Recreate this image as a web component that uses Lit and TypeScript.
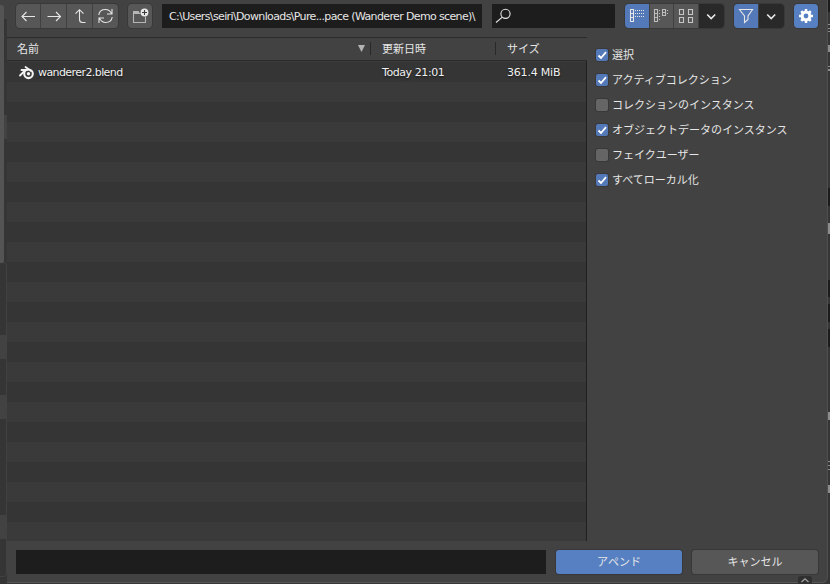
import { LitElement, html, css, svg } from "lit";
import { customElement, property } from "lit/decorators.js";
import { classMap } from "lit/directives/class-map.js";

const icons: Record<string, unknown> = {
  back: svg`<path d="M19 12.500H6.500M10.500 8L6 12.500L10.500 17"/>`,
  forward: svg`<path d="M5.500 12.500H18M14 8L18.500 12.500L14 17"/>`,
  up: svg`<path d="M11.500 6V15.500Q11.500 18.500 14.500 18.500H17.500M7.500 9.700L11.500 5.700L15.500 9.700"/>`,
  refresh: svg`<path d="M4.800 11Q5.500 5.500 11.500 5.500Q15.500 5.500 17.500 9.500M18 5V10H13M18.200 13Q17.500 18.500 11.500 18.500Q8 18.500 5.500 14.500M5 19V14H10"/>`,
  folder: svg`<path d="M12.500 9.500H5.500V18.500H17.500V12.500" stroke="#b5b5b5"/><path d="M5 10V7H10.500L12 9.500V10Z" fill="#b5b5b5" stroke="none"/><circle cx="16.500" cy="8.500" r="3.900" fill="#e8e8e8" stroke="none"/><path d="M14 8.500H19M16.500 6V11" stroke="#3c3c3c"/>`,
  list: svg`<path d="M5.500 5.500H8.500V17.500H5.500ZM5.500 9.500H8.500M5.500 13.500H8.500"/><path d="M10 6.500H20M10 9.500H20M10 12.500H20" stroke-dasharray="1 1"/>`,
  columns: svg`<path d="M4.500 5.500H7.500V17.500H4.500ZM4.500 9.500H7.500M4.500 13.500H7.500M12.500 5.500H15.500V11.500H12.500ZM12.500 8.500H15.500" stroke="#bdbdbd"/><path d="M9.500 6V16M17.500 6V12" stroke="#bdbdbd" stroke-dasharray="1 2"/>`,
  grid: svg`<path d="M5.500 5.500H9.500V10.500H5.500ZM14.500 5.500H18.500V10.500H14.500ZM5.500 13.500H9.500V18.500H5.500ZM14.500 13.500H18.500V18.500H14.500Z" stroke="#c6c6c6"/>`,
  down: svg`<path d="M7.200 10.500L11.200 14.500L15.200 10.500" stroke-width="1.700"/>`,
  filter: svg`<path d="M5.500 5.500H18.500L14 12V15.500L10.500 18.500V12Z"/>`,
  gear: svg`<circle cx="12" cy="12" r="3.900" stroke="#fff" stroke-width="3"/><path d="M12 5V8M12 16V19M5 12H8M16 12H19M7.200 7.200L9 9M15 15L16.800 16.800M7.200 16.800L9 15M15 9L16.800 7.200" stroke="#fff" stroke-width="2.500"/>`,
  search: svg`<circle cx="13.500" cy="9.800" r="4.600"/><path d="M10.300 13.100L4 18.500"/>`,
};

@customElement("ui-icon")
class UiIcon extends LitElement {
  @property() name = "";
  static styles = css`
    :host { display: block; width: 24px; height: 24px; flex: none; }
    svg { display: block; fill: none; stroke: #e6e6e6; stroke-width: 1.1; }
  `;
  render() {
    return html`<svg width="24" height="24" viewBox="0 0 24 24">${icons[this.name]}</svg>`;
  }
}

interface Tool { icon: string; w: number; kind?: "on" | "dark"; }

const navigation: Tool[] = [
  { icon: "back", w: 24 }, { icon: "forward", w: 25 }, { icon: "up", w: 25 }, { icon: "refresh", w: 25 },
];
const display: Tool[] = [
  { icon: "list", w: 24, kind: "on" }, { icon: "columns", w: 23 }, { icon: "grid", w: 24 }, { icon: "down", w: 25, kind: "dark" },
];
const filters: Tool[] = [
  { icon: "filter", w: 24, kind: "on" }, { icon: "down", w: 25, kind: "dark" },
];

const options: [string, boolean][] = [
  ["選択", true],
  ["アクティブコレクション", true],
  ["コレクションのインスタンス", false],
  ["オブジェクトデータのインスタンス", true],
  ["フェイクユーザー", false],
  ["すべてローカル化", true],
];

@customElement("app-root")
class AppRoot extends LitElement {
  static styles = css`
    * { box-sizing: border-box; }
    :host {
      display: grid; grid-template-columns: 7px 821px 2px; width: 830px; height: 584px; overflow: hidden;
      background: #373737; color: #e6e6e6;
      font: 11px/20px "DejaVu Sans", "Noto Sans CJK JP", sans-serif;
    }
    .left { position: relative; background: #353535; }
    .left::after { content: ""; position: absolute; left: 0; top: 5px; width: 4px; height: 258px; background: #545454; border-radius: 0 3px 2px 0; }
    .left::before { content: ""; position: absolute; left: -5px; top: 262px; width: 10px; height: 313px; border: 1px solid #414141; border-radius: 4px; }
    .notch { position: absolute; left: 0; width: 7px; height: 24px; background: #424242; }
    .top { top: 0; height: 19px; }
    .right { position: relative; background: #353535; overflow: hidden; }
    .slot { position: absolute; left: 0; width: 2px; background: #1b1b1b; }
    .fragment { position: absolute; left: 0; width: 2px; background: #8b8b8b; }
    .window { position: relative; display: flex; flex-direction: column; height: 583px; background: #424242; border-right: 1px solid #505050; border-bottom: 1px solid #555; border-bottom-right-radius: 6px; }
    .toolbar { display: flex; height: 37px; padding: 4px 0 0 9px; flex: none; align-items: flex-start; }
    .group { display: flex; gap: 1px; height: 24px; border-radius: 4px; overflow: hidden; background: #404040; box-shadow: 0 0 0 1px #393939; }
    .tool { display: flex; height: 24px; justify-content: center; background: #575757; }
    .on { background: #5379b8; }
    .dark { background: #292929; }
    .gear { background: #5680c2; }
    .gap { width: 10px; flex: none; }
    .field { height: 24px; background: #1d1d1d; flex: none; }
    .path { width: 320px; padding-left: 7px; line-height: 25px; white-space: nowrap; letter-spacing: -0.63px; overflow: hidden; }
    .search { width: 123px; }
    .body { display: grid; grid-template-columns: 580px 1fr; height: 504px; flex: none; }
    .files { display: flex; flex-direction: column; border-top: 1px solid #2b2b2b; }
    .head { display: grid; grid-template-columns: 365px 125px 1fr; height: 23px; border-bottom: 1px solid #2b2b2b; line-height: 22px; flex: none; }
    .cell { display: flex; padding: 1px 0 0 10px; align-items: center; white-space: nowrap; }
    .head .cell:first-child { justify-content: space-between; padding-right: 7px; }
    .head .sep { position: relative; }
    .head .sep::before { content: ""; position: absolute; left: -2px; top: 4px; height: 13px; border-left: 1px solid #292929; }
    .triangle { width: 7px; height: 7px; background: #b4b4b4; clip-path: polygon(0 0, 100% 0, 50% 100%); margin-bottom: 3px; }
    .rows { flex: 1; overflow: hidden; padding-top: 1px; background: repeating-linear-gradient(#353535 0 20px, #3a3a3a 20px 40px); background-position: 0 1px; border-right: 1px solid #202020; }
    .row { display: grid; grid-template-columns: 365px 125px 1fr; height: 20px; text-shadow: 0 1px 2px #151515; color: #f0f0f0; }
    .name { gap: 3px; letter-spacing: -0.58px; }
    .date { letter-spacing: -0.42px; }
    .size { letter-spacing: -0.2px; }
    .blend { display: block; width: 18px; height: 16px; }
    .options { padding: 5px 0 0 9px; }
    .option { display: flex; align-items: center; gap: 4px; height: 25px; white-space: nowrap; }
    .option span { padding-top: 2px; }
    .option svg { display: block; width: 12px; height: 12px; background: #656565; border-radius: 2px; box-shadow: 0 0 0 1px #393939; }
    .option .checked { background: #5379b8; }
    .footer { display: flex; padding: 9px 9px 0; }
    .filename { width: 530px; margin-right: 10px; }
    .button { width: 126px; height: 24px; border-radius: 3px; background: #575757; text-align: center; line-height: 26px; box-shadow: 0 0 0 1px #383838; margin-right: 10px; flex: none; }
    .primary { background: #5680c2; }
    .collapse { position: absolute; left: 791px; top: 576px; width: 14px; height: 8px; border-radius: 3px 3px 0 0; background: #303030; }
    .collapse svg { display: block; }
  `;

  private tools(list: Tool[]) {
    return html`<div class="group">${list.map(
      (t) => html`<div class=${classMap({ tool: true, on: t.kind === "on", dark: t.kind === "dark", gear: t.icon === "gear" })} style="width:${t.w}px"><ui-icon name=${t.icon}></ui-icon></div>`
    )}</div>`;
  }

  render() {
    return html`
      <div class="left">
        <div class="notch top"></div>
        ${[115, 335, 395, 515].map((y) => html`<div class="notch" style="top:${y}px"></div>`)}
      </div>
      <div class="window">
        <div class="toolbar">
          ${this.tools(navigation)}
          <div class="gap"></div>
          ${this.tools([{ icon: "folder", w: 24 }])}
          <div class="gap"></div>
          <div class="field path">C:\\Users\\seiri\\Downloads\\Pure...pace (Wanderer Demo scene)\\</div>
          <div class="gap"></div>
          <div class="field search"><ui-icon name="search"></ui-icon></div>
          <div class="gap"></div>
          ${this.tools(display)}
          <div class="gap"></div>
          ${this.tools(filters)}
          <div class="gap"></div>
          ${this.tools([{ icon: "gear", w: 24, kind: "on" }])}
        </div>
        <div class="body">
          <div class="files">
            <div class="head">
              <div class="cell">名前<span class="triangle"></span></div>
              <div class="cell sep">更新日時</div>
              <div class="cell sep">サイズ</div>
            </div>
            <div class="rows">
              <div class="row">
                <div class="cell name">
                  <svg class="blend" viewBox="0 0 18 16" fill="none" stroke="#f2f2f2">
                    <circle cx="11.500" cy="8.800" r="4.300" stroke-width="2.100"/>
                    <circle cx="11.500" cy="8.800" r="1.700" fill="#f2f2f2" stroke="none"/>
                    <path d="M4.500 5H10M8.500 2L14 6M8.500 5L3 10.500" stroke-width="1.800" stroke-linecap="round"/>
                  </svg>
                  wanderer2.blend
                </div>
                <div class="cell date">Today 21:01</div>
                <div class="cell size">361.4 MiB</div>
              </div>
            </div>
          </div>
          <div class="options">
            ${options.map(([label, on]) => html`<div class="option">
              <svg class=${classMap({ checked: on })} viewBox="0 0 12 12">${on ? svg`<path d="M2.500 6.500L5 9L10 3.200" fill="none" stroke="#fff" stroke-width="1.800"/>` : null}</svg>
              <span>${label}</span>
            </div>`)}
          </div>
        </div>
        <div class="footer">
          <div class="field filename"></div>
          <div class="button primary">アペンド</div>
          <div class="button">キャンセル</div>
        </div>
        <div class="collapse"><svg width="14" height="8" fill="none" stroke="#a0a0a0" stroke-width="1.300"><path d="M3.500 6L7 2.800L10.500 6"/></svg></div>
      </div>
      <div class="right">
        ${[[0, 12], [188, 18], [280, 17], [304, 18], [329, 18]].map(([y, h]) => html`<div class="slot" style="top:${y}px;height:${h}px"></div>`)}
        ${[[24, 1], [28, 1], [31, 1], [45, 7], [66, 1], [69, 2], [223, 11], [412, 8], [461, 1], [465, 1], [469, 1], [485, 8]].map(([y, h]) => html`<div class="fragment" style="top:${y}px;height:${h}px"></div>`)}
      </div>
    `;
  }
}
